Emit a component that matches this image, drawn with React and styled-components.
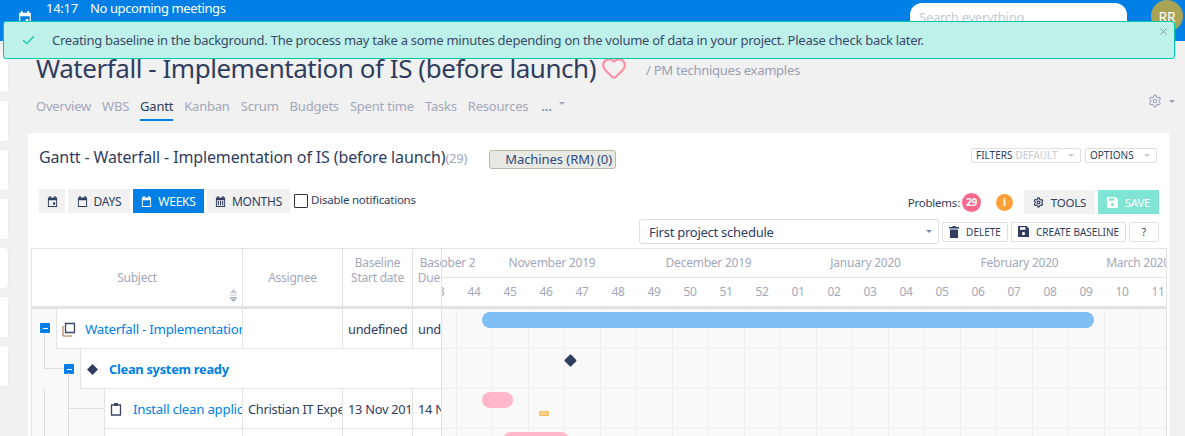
import React from "react";
import styled, { createGlobalStyle } from "styled-components";
import { Settings, Check, X, Heart } from "lucide-react";

const GlobalStyle = createGlobalStyle`
  html, body {
    margin: 0;
    padding: 0;
    height: 436px;
    overflow: hidden;
    background: #f1f1f1;
    font-family: "Noto Sans", "Open Sans", sans-serif;
    color: #2f3d5e;
  }
  * {
    box-sizing: border-box;
    letter-spacing: -0.02em;
  }
`;

const Page = styled.div`
  position: relative;
  width: 1185px;
  height: 436px;
  overflow: hidden;
`;

const TopBar = styled.header`
  height: 41px;
  background: #0080e6;
  color: #fff;
  display: flex;
  align-items: flex-start;
  padding: 0 2px 0 18px;
`;

const BarIcon = styled.div`
  margin-top: 11px;
  margin-right: 14px;
  width: 14px;
  line-height: 0;
`;

const Clock = styled.div`
  font-size: 13px;
  line-height: 17px;
  width: 44px;
`;

const Meetings = styled.div`
  font-size: 13px;
  line-height: 17px;
  letter-spacing: -0.03em;
  flex: 1;
`;

const Search = styled.div`
  width: 217px;
  height: 29px;
  margin-top: 3px;
  margin-right: 24px;
  border-radius: 12px;
  background: #fff;
  color: #c5c9d3;
  font-size: 13px;
  padding: 5px 9px;
`;

const Avatar = styled.div`
  width: 32px;
  height: 32px;
  border-radius: 50%;
  background: #a9a356;
  color: #fff;
  font-size: 14px;
  display: flex;
  align-items: center;
  justify-content: center;
`;

const Toast = styled.div`
  position: absolute;
  left: 3px;
  top: 21px;
  width: 1172px;
  height: 38px;
  border: 1px solid #00c9a7;
  border-radius: 3px;
  background: #bef1e9;
  color: #3b4a6b;
  font-size: 13px;
  display: flex;
  align-items: center;
  padding-left: 17px;
`;

const ToastText = styled.span`
  margin-left: 16px;
`;

const ToastClose = styled.div`
  position: absolute;
  right: 5px;
  top: 4px;
  color: #7f96a6;
  line-height: 0;
`;

const Layout = styled.div`
  display: flex;
  width: 1185px;
`;

const Rail = styled.aside`
  width: 8px;
  flex: none;
  display: flex;
  flex-direction: column;
  gap: 9px;
  padding-top: 11px;
`;

const RailCard = styled.div`
  height: 40px;
  background: #fff;
  border-radius: 0 3px 3px 0;
  box-shadow: 0 0 2px rgba(0, 0, 0, 0.08);
`;

const Main = styled.main`
  flex: 1;
  min-width: 0;
  padding-left: 20px;
  padding-right: 15px;
`;

const TitleRow = styled.div`
  height: 48px;
  padding: 6px 0 0 8px;
  display: flex;
  align-items: center;
`;

const Title = styled.h1`
  margin: 0;
  font-size: 26px;
  line-height: 44px;
  font-weight: 400;
  letter-spacing: -0.0175em;
  color: #2f3d5e;
  white-space: nowrap;
`;

const HeartMark = styled.span`
  margin-left: 5px;
  line-height: 0;
  color: #fd8fa5;
`;

const Crumb = styled.span`
  margin-left: 19px;
  font-size: 13px;
  color: #9a9fb1;
  padding-top: 4px;
`;

const Tabs = styled.nav`
  display: flex;
  align-items: flex-start;
  height: 44px;
  padding: 8px 0 0 8px;
  gap: 11px;
`;

const Tab = styled.div`
  font-size: 13px;
  line-height: 18px;
  height: 24px;
  letter-spacing: -0.016em;
  color: ${(p) => (p.$active ? "#2f3d5e" : "#a3a7b9")};
  border-bottom: ${(p) => (p.$active ? "2px solid #0080e6" : "none")};
  white-space: nowrap;
`;

const MoreTab = styled(Tab)`
  display: flex;
  align-items: flex-start;
  gap: 7px;
  margin-left: 2px;
  font-weight: 700;
  color: #8d92a6;
`;

const MoreCaret = styled.i`
  display: block;
  margin-top: 5px;
  border-left: 3px solid transparent;
  border-right: 3px solid transparent;
  border-top: 3px solid #a3a7b9;
`;

const Caret = styled.i`
  display: inline-block;
  flex: none;
  border-left: ${(p) => p.$size || 3}px solid transparent;
  border-right: ${(p) => p.$size || 3}px solid transparent;
  border-top: ${(p) => p.$size || 3}px solid ${(p) => p.$color || "#9a9fb1"};
`;

const TabTools = styled.div`
  margin-left: auto;
  margin-right: -5px;
  margin-top: -5px;
  height: 18px;
  display: flex;
  align-items: center;
  gap: 7px;
  color: #a3a7b9;
  line-height: 0;
`;

const Panel = styled.section`
  height: 320px;
  background: #fff;
  border-radius: 4px 4px 0 0;
  padding: 0 3px;
  display: flex;
  flex-direction: column;
`;

const PanelHead = styled.div`
  height: 56px;
  display: flex;
  align-items: flex-start;
  padding: 14px 10px 0 8px;
`;

const PanelTitle = styled.div`
  font-size: 16px;
  line-height: 20px;
  letter-spacing: -0.008em;
  color: #2f3d5e;
  white-space: nowrap;
`;

const Count = styled.span`
  color: #a3a7b9;
  font-size: 13px;
`;

const Machines = styled.div`
  margin-left: 22px;
  margin-top: 3px;
  height: 19px;
  width: 127px;
  background: #e9e9e4;
  border: 1px solid #b9b8ab;
  border-radius: 3px;
  color: #2f4a80;
  font-size: 13px;
  line-height: 17px;
  letter-spacing: -0.005em;
  text-align: right;
  padding-right: 3px;
  white-space: nowrap;
`;

const HeadRight = styled.div`
  margin-left: auto;
  margin-top: 1px;
  display: flex;
  gap: 4px;
`;

const Drop = styled.div`
  height: 15px;
  width: ${(p) => p.$w}px;
  border: 1px solid #dfdfdf;
  border-radius: 2px;
  font-size: 10px;
  line-height: 13px;
  letter-spacing: 0;
  padding: 0 6px 0 4px;
  display: flex;
  align-items: center;
  justify-content: space-between;
  white-space: nowrap;
`;

const Muted = styled.span`
  color: #c5c9d3;
  letter-spacing: 0;
  margin-left: 3px;
  margin-right: auto;
`;

const Toolbar = styled.div`
  height: 59px;
  display: flex;
  align-items: flex-start;
  padding: 0 8px;
`;

const ViewGroup = styled.div`
  display: flex;
  align-items: center;
  gap: 3px;
`;

const ViewBtn = styled.div`
  height: 24px;
  width: ${(p) => p.$w}px;
  display: flex;
  align-items: center;
  justify-content: center;
  gap: 6px;
  font-size: 12px;
  background: ${(p) => (p.$active ? "#0080e6" : "#f1f1f1")};
  color: ${(p) => (p.$active ? "#fff" : "#2f3d5e")};
`;

const Checkbox = styled.div`
  width: 14px;
  height: 14px;
  border: 1px solid #333;
  border-radius: 1px;
  margin-left: 1px;
`;

const CheckLabel = styled.div`
  font-size: 11.5px;
  margin-top: -3px;
  white-space: nowrap;
`;

const ActionCol = styled.div`
  margin-left: auto;
  display: flex;
  flex-direction: column;
  align-items: flex-end;
  gap: 5px;
  margin-top: 1px;
`;

const ActionRow = styled.div`
  display: flex;
  align-items: center;
`;

const Problems = styled.div`
  font-size: 11.5px;
  margin-right: 2px;
`;

const Badge = styled.div`
  width: ${(p) => p.$size}px;
  height: ${(p) => p.$size}px;
  border-radius: 50%;
  background: ${(p) => p.$bg};
  color: #fff;
  font-size: 10px;
  font-weight: 700;
  display: flex;
  align-items: center;
  justify-content: center;
  margin-left: ${(p) => p.$ml || 0}px;
`;

const BigBtn = styled.div`
  height: 24px;
  width: ${(p) => p.$w}px;
  margin-left: ${(p) => p.$ml || 0}px;
  background: ${(p) => p.$bg};
  color: ${(p) => p.$fg};
  font-size: 11.5px;
  display: flex;
  align-items: center;
  justify-content: center;
  gap: 7px;
`;

const Schedule = styled.div`
  width: 300px;
  height: 25px;
  border: 1px solid #dfdfdf;
  border-radius: 3px;
  font-size: 13px;
  padding: 0 6px 0 9px;
  display: flex;
  align-items: center;
  justify-content: space-between;
`;

const SmallBtn = styled.div`
  height: 20px;
  width: ${(p) => p.$w}px;
  margin-left: 3px;
  border: 1px solid #dfdfdf;
  border-radius: 2px;
  font-size: 10px;
  letter-spacing: 0;
  display: flex;
  align-items: center;
  justify-content: center;
  gap: 7px;
  white-space: nowrap;
`;

const GanttWrap = styled.div`
  display: flex;
  flex: 1;
  min-height: 0;
  overflow: hidden;
  border: 1px solid #e2e2e2;
  border-bottom: none;
`;

const TablePane = styled.div`
  width: 410px;
  flex: none;
  overflow: hidden;
  background: #f9f9f9;
  border-right: 1px solid #e2e2e2;
`;

const ColsRow = styled.div`
  display: grid;
  grid-template-columns: 211px 100px 70px 60px;
  height: 60px;
  background: #fff;
  border-bottom: 3px solid #e2e2e2;
`;

const ColHead = styled.div`
  position: relative;
  border-right: 1px solid #e2e2e2;
  color: #a3a7b9;
  font-size: 12px;
  line-height: 15px;
  text-align: center;
  display: flex;
  align-items: center;
  justify-content: center;
  padding-bottom: ${(p) => (p.$raised ? 15 : 0)}px;
  overflow: hidden;
  white-space: pre-line;
`;

const SortMark = styled.div`
  position: absolute;
  right: 4px;
  bottom: 4px;
  line-height: 0;
`;

const Row = styled.div`
  position: relative;
  height: 40px;
  padding-left: ${(p) => p.$indent}px;
`;

const RowBody = styled.div`
  height: 40px;
  display: grid;
  grid-template-columns: ${(p) => p.$cols};
  background: #fff;
  border-left: 1px solid #e2e2e2;
  border-bottom: 1px solid #e2e2e2;
`;

const Cell = styled.div`
  display: flex;
  align-items: center;
  padding-top: 1px;
  overflow: hidden;
  white-space: nowrap;
  padding-left: 5px;
  border-right: ${(p) => (p.$open ? "none" : "1px solid #e2e2e2")};
  color: ${(p) => (p.$link ? "#0080e6" : "#2f3d5e")};
  font-weight: ${(p) => (p.$bold ? 700 : 400)};
  font-size: ${(p) => (p.$link && !p.$bold ? 13.3 : 12.8)}px;
`;

const Toggle = styled.div`
  position: absolute;
  left: ${(p) => p.$x}px;
  top: ${(p) => p.$y}px;
  width: 10px;
  height: 10px;
  background: #0080e6;
  border-radius: 1px;
  display: flex;
  align-items: center;
  justify-content: center;

  &::after {
    content: "";
    width: 5px;
    height: 1px;
    background: #fff;
  }
`;

const TreeLine = styled.div`
  position: absolute;
  left: ${(p) => p.$x}px;
  top: ${(p) => p.$y}px;
  width: ${(p) => p.$w || 1}px;
  height: ${(p) => p.$h || 1}px;
  background: #dcdcdc;
`;

const RowIcon = styled.span`
  width: 16px;
  margin-right: 7px;
  flex: none;
  line-height: 0;
`;

const Timeline = styled.div`
  flex: 1;
  min-width: 0;
  overflow: hidden;
  background: #f9f9f9;
`;

const MonthRow = styled.div`
  height: 29px;
  display: flex;
  background: #fff;
  border-bottom: 1px solid #e2e2e2;
`;

const Month = styled.div`
  flex: none;
  width: ${(p) => p.$w}px;
  padding-left: ${(p) => p.$pl || 0}px;
  overflow: hidden;
  display: flex;
  justify-content: center;
  white-space: nowrap;
  color: #a3a7b9;
  font-size: 12px;
  line-height: 28px;
`;

const WeekRow = styled.div`
  height: 31px;
  display: flex;
  background: #fff;
  border-bottom: 3px solid #e2e2e2;
`;

const Week = styled.div`
  flex: none;
  width: 36px;
  margin-left: ${(p) => p.$ml || 0}px;
  text-align: center;
  color: #a3a7b9;
  font-size: 12px;
  line-height: 28px;
`;

const GanttRow = styled.div`
  position: relative;
  height: 40px;
  border-bottom: 1px solid #eee;
  background-image: linear-gradient(to right, transparent 35px, #eee 35px);
  background-size: 36px 100%;
  background-position: 15px 0;
`;

const Bar = styled.div`
  position: absolute;
  left: ${(p) => p.$x}px;
  top: 3px;
  width: ${(p) => p.$w}px;
  height: 16px;
  border-radius: 8px;
  background: ${(p) => p.$color};
`;

const PlanBar = styled.div`
  position: absolute;
  left: 97px;
  top: 22px;
  width: 10px;
  height: 5px;
  border: 1px solid #f9b957;
  border-radius: 1px;
  background: #fdd48a;
`;

const Milestone = styled.div`
  position: absolute;
  left: 123.5px;
  top: 7px;
  width: 9px;
  height: 9px;
  transform: rotate(45deg);
  border-radius: 1px;
  background: #2f3d5e;
`;

const tabs = ["Overview", "WBS", "Gantt", "Kanban", "Scrum", "Budgets", "Spent time", "Tasks", "Resources"];
const months = [
  ["October 2019", 33],
  ["November 2019", 154],
  ["December 2019", 159],
  ["January 2020", 155],
  ["February 2020", 153],
  ["March 2020", 70, 14],
];
const weeks = ["43", "44", "45", "46", "47", "48", "49", "50", "51", "52", "01", "02", "03", "04", "05", "06", "07", "08", "09", "10", "11"];

const CalIcon = ({ kind, size = 11 }) => (
  <svg width={size} height={size} viewBox="0 0 12 12" fill="currentColor">
    <path d="M2.500 0h1.500v2H2.500zM8 0h1.500v2H8z" />
    <path fillRule="evenodd" d="M1 1.500h10V12H1zM2 4.500V11h8V4.500z" />
    {kind === "today" && <path d="M6.500 7h2.500v2.500H6.500z" />}
    {kind === "months" && <path d="M3 5.500h1.200v4.500H3zM5.400 5.500h1.200v4.500H5.400zM7.800 5.500H9v4.500H7.800z" />}
  </svg>
);

const FloppyIcon = () => (
  <svg width="11" height="11" viewBox="0 0 11 11" fill="currentColor">
    <path fillRule="evenodd" d="M0 0h8.500L11 2.500V11H0zM2 1.200v2.600h5.500V1.200zM5.500 6a1.600 1.600 0 1 0 .01 0z" />
  </svg>
);

const TrashIcon = () => (
  <svg width="10" height="12" viewBox="0 0 10 12" fill="currentColor">
    <path d="M3.500 0h3v1H10v1.500H0V1h3.500zM1 3.500h8V12H1z" />
  </svg>
);

const App = () => {
  return (
    <Page>
      <GlobalStyle />
      <TopBar>
        <BarIcon><CalIcon kind="today" size={14} /></BarIcon>
        <Clock>14:17</Clock>
        <Meetings>No upcoming meetings</Meetings>
        <Search>Search everything</Search>
        <Avatar>RR</Avatar>
      </TopBar>
      <Toast>
        <Check size={15} color="#00c9a7" strokeWidth={2} />
        <ToastText>
          Creating baseline in the background. The process may take a some minutes depending on the volume of data in your project. Please check back later.
        </ToastText>
        <ToastClose><X size={11} /></ToastClose>
      </Toast>
      <Layout>
        <Rail>
          {[0, 1, 2, 3, 4, 5, 6].map((n) => <RailCard key={n} />)}
        </Rail>
        <Main>
          <TitleRow>
            <Title>Waterfall - Implementation of IS (before launch)</Title>
            <HeartMark><Heart size={26} strokeWidth={2} /></HeartMark>
            <Crumb>/ PM techniques examples</Crumb>
          </TitleRow>
          <Tabs>
            {tabs.map((t) => <Tab key={t} $active={t === "Gantt"}>{t}</Tab>)}
            <MoreTab>...<MoreCaret /></MoreTab>
            <TabTools><Settings size={14} /><Caret /></TabTools>
          </Tabs>
          <Panel>
            <PanelHead>
              <PanelTitle>Gantt - Waterfall - Implementation of IS (before launch)<Count>(29)</Count></PanelTitle>
              <Machines>Machines (RM) (0)</Machines>
              <HeadRight>
                <Drop $w={110}>FILTERS<Muted>DEFAULT</Muted><Caret $color="#c5c9d3" /></Drop>
                <Drop $w={72}>OPTIONS<Caret $color="#c5c9d3" /></Drop>
              </HeadRight>
            </PanelHead>
            <Toolbar>
              <ViewGroup>
                <ViewBtn $w={26}><CalIcon kind="today" /></ViewBtn>
                <ViewBtn $w={62}><CalIcon />DAYS</ViewBtn>
                <ViewBtn $w={71} $active><CalIcon />WEEKS</ViewBtn>
                <ViewBtn $w={83}><CalIcon kind="months" />MONTHS</ViewBtn>
                <Checkbox />
                <CheckLabel>Disable notifications</CheckLabel>
              </ViewGroup>
              <ActionCol>
                <ActionRow>
                  <Problems>Problems:</Problems>
                  <Badge $bg="#f8688d" $size={19}>29</Badge>
                  <Badge $bg="#ff9f37" $size={17} $ml={15}>i</Badge>
                  <BigBtn $w={71} $ml={11} $bg="#f1f1f1" $fg="#2f3d5e"><Settings size={11} strokeWidth={2.500} />TOOLS</BigBtn>
                  <BigBtn $w={61} $ml={3} $bg="#7fe4d3" $fg="#fff"><FloppyIcon />SAVE</BigBtn>
                </ActionRow>
                <ActionRow>
                  <Schedule>First project schedule<Caret $color="#7888aa" $size={3.500} /></Schedule>
                  <SmallBtn $w={66}><TrashIcon />DELETE</SmallBtn>
                  <SmallBtn $w={115}><FloppyIcon />CREATE BASELINE</SmallBtn>
                  <SmallBtn $w={30}>?</SmallBtn>
                </ActionRow>
              </ActionCol>
            </Toolbar>
            <GanttWrap>
              <TablePane>
                <ColsRow>
                  <ColHead>Subject<SortMark>
                    <svg width="9" height="13" viewBox="0 0 9 13"><path d="M4.500 0 8 4H1z" fill="#c3c8d0" /><path d="M1 6h7" stroke="#c3c8d0" /><path d="M1 8.500h7" stroke="#9fb0bb" /><path d="M4.500 13 8 9.500H1z" fill="#9fb0bb" /></svg>
                  </SortMark></ColHead>
                  <ColHead>Assignee</ColHead>
                  <ColHead $raised>{"Baseline\nStart date"}</ColHead>
                  <ColHead $raised>{"Baseline\nDue date"}</ColHead>
                </ColsRow>
                <Row $indent={24}>
                  <Toggle $x={8} $y={14} />
                  <TreeLine $x={12} $y={24} $h={36} />
                  <RowBody $cols="186px 100px 70px 60px">
                    <Cell $link><RowIcon><svg width="15" height="15" viewBox="0 0 15 15"><path d="M1 4v10h9" fill="none" stroke="#b5654a" strokeWidth="1" /><path d="M3.500 1.500h9v9h-9z" fill="none" stroke="#3a4566" strokeWidth="1.300" /></svg></RowIcon>Waterfall - Implementation of IS</Cell>
                    <Cell />
                    <Cell>undefined</Cell>
                    <Cell>undefined</Cell>
                  </RowBody>
                </Row>
                <Row $indent={48}>
                  <TreeLine $x={12} $y={19} $w={20} />
                  <Toggle $x={32} $y={15} />
                  <TreeLine $x={36} $y={24} $h={56} />
                  <RowBody $cols="1fr">
                    <Cell $link $bold $open><RowIcon><svg width="13" height="13" viewBox="0 0 13 13"><path d="M6.500 1 12 6.500 6.500 12 1 6.500z" fill="#2f3d5e" /></svg></RowIcon>Clean system ready</Cell>
                  </RowBody>
                </Row>
                <Row $indent={72}>
                  <TreeLine $x={12} $y={0} $h={40} />
                  <TreeLine $x={36} $y={19} $w={36} />
                  <RowBody $cols="138px 100px 70px 60px">
                    <Cell $link><RowIcon><svg width="12" height="14" viewBox="0 0 12 14"><path d="M1.500 3h9v10h-9z" fill="none" stroke="#3a4566" strokeWidth="1.300" /><path d="M4 1h4v3H4z" fill="#3a4566" /></svg></RowIcon>Install clean application</Cell>
                    <Cell>Christian IT Expert</Cell>
                    <Cell>13 Nov 2019</Cell>
                    <Cell>14 Nov 2019</Cell>
                  </RowBody>
                </Row>
                <Row $indent={72}>
                  <TreeLine $x={12} $y={0} $h={40} />
                  <TreeLine $x={36} $y={0} $h={40} />
                  <RowBody $cols="138px 100px 70px 60px"><Cell /><Cell /><Cell /><Cell /></RowBody>
                </Row>
              </TablePane>
              <Timeline>
                <MonthRow>{months.map(([m, w, pl]) => <Month key={m} $w={w} $pl={pl}>{m}</Month>)}</MonthRow>
                <WeekRow>{weeks.map((w, i) => <Week key={w} $ml={i === 0 ? -22 : 0}>{w}</Week>)}</WeekRow>
                <GanttRow><Bar $x={40} $w={612} $color="#7fbdf4" /></GanttRow>
                <GanttRow><Milestone /></GanttRow>
                <GanttRow><Bar $x={40} $w={31} $color="#ffb8c9" /><PlanBar /></GanttRow>
                <GanttRow><Bar $x={61} $w={66} $color="#ffb8c9" /></GanttRow>
              </Timeline>
            </GanttWrap>
          </Panel>
        </Main>
      </Layout>
    </Page>
  );
};

export default App;
